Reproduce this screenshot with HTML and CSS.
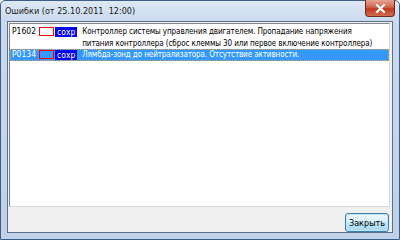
FILE: index.html
```html
<!DOCTYPE html>
<html>
	<head>
		<meta charset="utf-8" />
		<title>Ошибки</title>
		<link rel="stylesheet" href="styles.css">
	</head>
	<body>
		<div class="window">
			<div class="titlebar">
				<span class="title">Ошибки (от 25.10.2011&nbsp;&nbsp;12:00)</span>
				<div class="close">
					<svg width="11" height="9" viewBox="0 0 11 9">
						<path d="M2 1 L9 8 M9 1 L2 8" stroke="#fff" stroke-width="2.2" stroke-linecap="square" />
					</svg>
				</div>
			</div>
			<div class="client">
				<div class="list">
					<div class="row">
						<span class="code">P1602</span>
						<span class="flag"></span>
						<span class="saved">сохр</span>
						<span class="text">Контроллер системы управления двигателем. Пропадание напряжения питания контроллера (сброс клеммы 30 или первое включение контроллера)</span>
					</div>
					<div class="row selected">
						<span class="code">P0134</span>
						<span class="flag"></span>
						<span class="saved">сохр</span>
						<span class="text">Лямбда-зонд до нейтрализатора. Отсутствие активности.</span>
					</div>
				</div>
				<div class="buttons">
					<button class="btn">Закрыть</button>
				</div>
			</div>
		</div>
	</body>
</html>
```

FILE: styles.css
```css
*{
	margin: 0;
	padding: 0;
	box-sizing: border-box;
}
body{
	width: 400px;
	height: 240px;
	overflow: hidden;
	font-family: "DejaVu Sans Condensed", "DejaVu Sans", sans-serif;
	font-size: 9px;
	background: #fff;
}
.window{
	width: 400px;
	height: 240px;
	border: 1px solid #3f5e86;
	border-radius: 5px 5px 0 0;
	background: linear-gradient(#dfe9f5, #c9d9ee 20px, #bfd2ea);
	padding: 0 6px 6px 6px;
	display: flex;
	flex-direction: column;
}
.titlebar{
	height: 20px;
	display: flex;
	align-items: flex-start;
	justify-content: space-between;
}
.title{
	font-size: 9px;
	color: #1a1a1a;
	padding: 5px 0 0 0;
	margin-left: -2px;
}
.close{
	width: 30px;
	height: 17px;
	margin-top: -1px;
	margin-right: -2px;
	border: 1px solid #6b2a22;
	border-top: none;
	border-radius: 0 0 4px 4px;
	background: linear-gradient(#e8a493, #d0644c 45%, #c0391f 55%, #d26b4c);
	display: flex;
	align-items: center;
	justify-content: center;
}
.client{
	flex: 1;
	background: #f0f0f0;
	border: 1px solid #5a6e87;
	display: flex;
	flex-direction: column;
	padding: 1px 2px 0 1px;
}
.list{
	height: 184px;
	background: #fff;
	border: 1px solid #828790;
	border-right-color: #d9d9d9;
	border-bottom-color: #d9d9d9;
	padding-top: 2px;
	font-size: 8px;
}
.row{
	display: flex;
	align-items: flex-start;
	line-height: 11.5px;
	padding: 0 2px 0 1px;
	color: #000;
}
.code{
	width: 28px;
	flex-shrink: 0;
	padding-left: 1px;
	font-size: 8.5px;
}
.flag{
	width: 15px;
	height: 9px;
	margin-top: 1px;
	border: 1px solid #ff0000;
	flex-shrink: 0;
}
.saved{
	background: #0000f0;
	color: #fff;
	padding: 0 2px 0 2px;
	margin-left: 1px;
	line-height: 10px;
	margin-top: 1px;
	flex-shrink: 0;
	font-size: 8.5px;
}
.text{
	padding-left: 5px;
	padding-right: 12px;
	letter-spacing: -0.1px;
}
.selected{
	background: #3399ff;
	color: #fff;
	outline: 1px dotted #e6a050;
	outline-offset: -1px;
}
.selected .flag{
	background: #3399ff;
}
.buttons{
	flex: 1;
	display: flex;
	justify-content: flex-end;
	align-items: center;
	padding-right: 1px;
}
.btn{
	width: 44px;
	height: 19px;
	font-family: "DejaVu Sans Condensed", "DejaVu Sans", sans-serif;
	font-size: 9px;
	color: #000;
	border: 1px solid #3c7fb1;
	border-radius: 3px;
	background: linear-gradient(#eaf6fd, #d9f0fc 50%, #bee6fd 50%, #a7d9f5);
	box-shadow: inset 0 0 0 1px #c4e5f6;
	margin-top: 6px;
}
```
